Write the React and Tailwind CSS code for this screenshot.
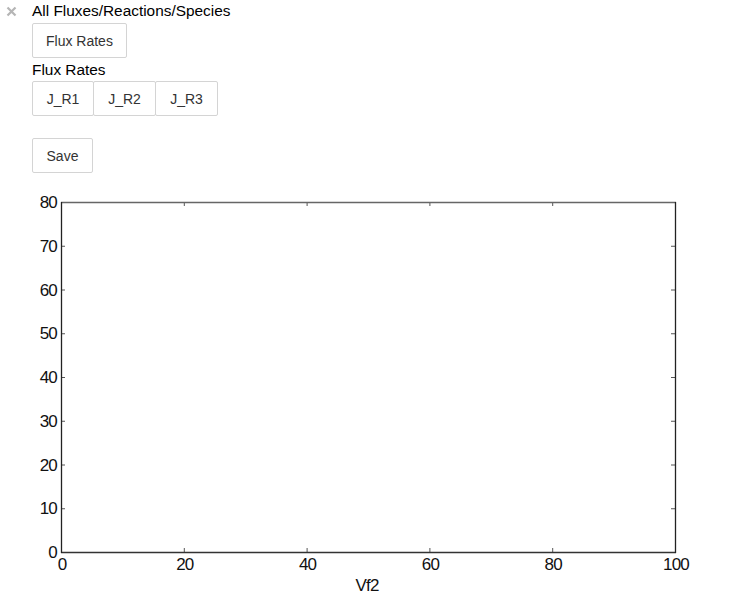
import React from "react";

const L = 61;
const R = 675;
const T = 16;
const B = 366;

const yTicks = [0, 10, 20, 30, 40, 50, 60, 70, 80];
const xTicks = [0, 20, 40, 60, 80, 100];

const yPos = (v) => B - ((B - T) * v) / 80;
const xPos = (v) => L + ((R - L) * v) / 100;

function Plot() {
  return (
    <svg
      width="730"
      height="424"
      className="block"
      style={{ fontFamily: '"Liberation Sans", Arial, sans-serif' }}
    >
      {/* tick marks pointing inward */}
      {yTicks.map((v) => (
        <g key={"y" + v} stroke="#555" strokeWidth="1">
          <line x1={L} x2={L + 4} y1={yPos(v) + 0.5} y2={yPos(v) + 0.5} />
          <line x1={R - 4} x2={R} y1={yPos(v) + 0.5} y2={yPos(v) + 0.5} />
        </g>
      ))}
      {xTicks.map((v) => (
        <g key={"x" + v} stroke="#555" strokeWidth="1">
          <line x1={xPos(v) + 0.5} x2={xPos(v) + 0.5} y1={B} y2={B - 4} />
          <line x1={xPos(v) + 0.5} x2={xPos(v) + 0.5} y1={T} y2={T + 4} />
        </g>
      ))}
      {/* frame */}
      <line x1={L} x2={R + 1} y1={T + 0.5} y2={T + 0.5} stroke="#666" strokeWidth="1.5" />
      <line x1={L} x2={R + 1} y1={B + 0.5} y2={B + 0.5} stroke="#333" strokeWidth="1.3" />
      <line x1={L + 0.5} x2={L + 0.5} y1={T} y2={B + 1} stroke="#222" strokeWidth="1.3" />
      <line x1={R + 0.5} x2={R + 0.5} y1={T} y2={B + 1} stroke="#222" strokeWidth="1.3" />
      {/* y labels */}
      {yTicks.map((v) => (
        <text
          key={"yl" + v}
          x={L - 4}
          y={yPos(v) + 6}
          textAnchor="end"
          fontSize="17"
          fill="#111"
          letterSpacing="-0.8"
        >
          {v}
        </text>
      ))}
      {/* x labels */}
      {xTicks.map((v) => (
        <text
          key={"xl" + v}
          x={xPos(v) + 1}
          y={B + 18}
          textAnchor="middle"
          fontSize="17"
          fill="#111"
          letterSpacing="-0.8"
        >
          {v}
        </text>
      ))}
      <text
        x={367}
        y={405}
        textAnchor="middle"
        fontSize="17"
        fill="#111"
        letterSpacing="-0.8"
      >
        Vf2
      </text>
    </svg>
  );
}

function Btn({ children, className = "" }) {
  return (
    <button
      className={
        "h-[35px] px-[13px] border border-[#d4d4d4] rounded-[2px] bg-white text-[14px] text-[#333] leading-none " +
        className
      }
    >
      {children}
    </button>
  );
}

export default function App() {
  return (
    <div
      className="bg-white w-[730px] h-[609px] overflow-hidden relative text-black"
      style={{ fontFamily: '"Liberation Sans", Arial, sans-serif' }}
    >
      {/* close control */}
      <svg className="absolute left-[6px] top-[6px]" width="11" height="11" viewBox="0 0 11 11">
        <path d="M1.5 1.5 L9.5 9.5 M9.5 1.5 L1.5 9.5" stroke="#b5b5b5" strokeWidth="2.2" />
      </svg>
      <div className="pl-[32px] pt-[1px]">
        <div className="text-[15.4px] leading-[20px] h-[22px]">All Fluxes/Reactions/Species</div>
        <Btn>Flux Rates</Btn>
        <div className="text-[15.4px] leading-[20px] h-[23px] pt-[2px]">Flux Rates</div>
        <div className="flex">
          <Btn className="w-[62px]">J_R1</Btn>
          <Btn className="w-[63px] -ml-px">J_R2</Btn>
          <Btn className="w-[63px] -ml-px">J_R3</Btn>
        </div>
        <div className="h-[22px]" />
        <Btn className="w-[61px]">Save</Btn>
      </div>
      <div className="mt-[13px]">
        <Plot />
      </div>
    </div>
  );
}
